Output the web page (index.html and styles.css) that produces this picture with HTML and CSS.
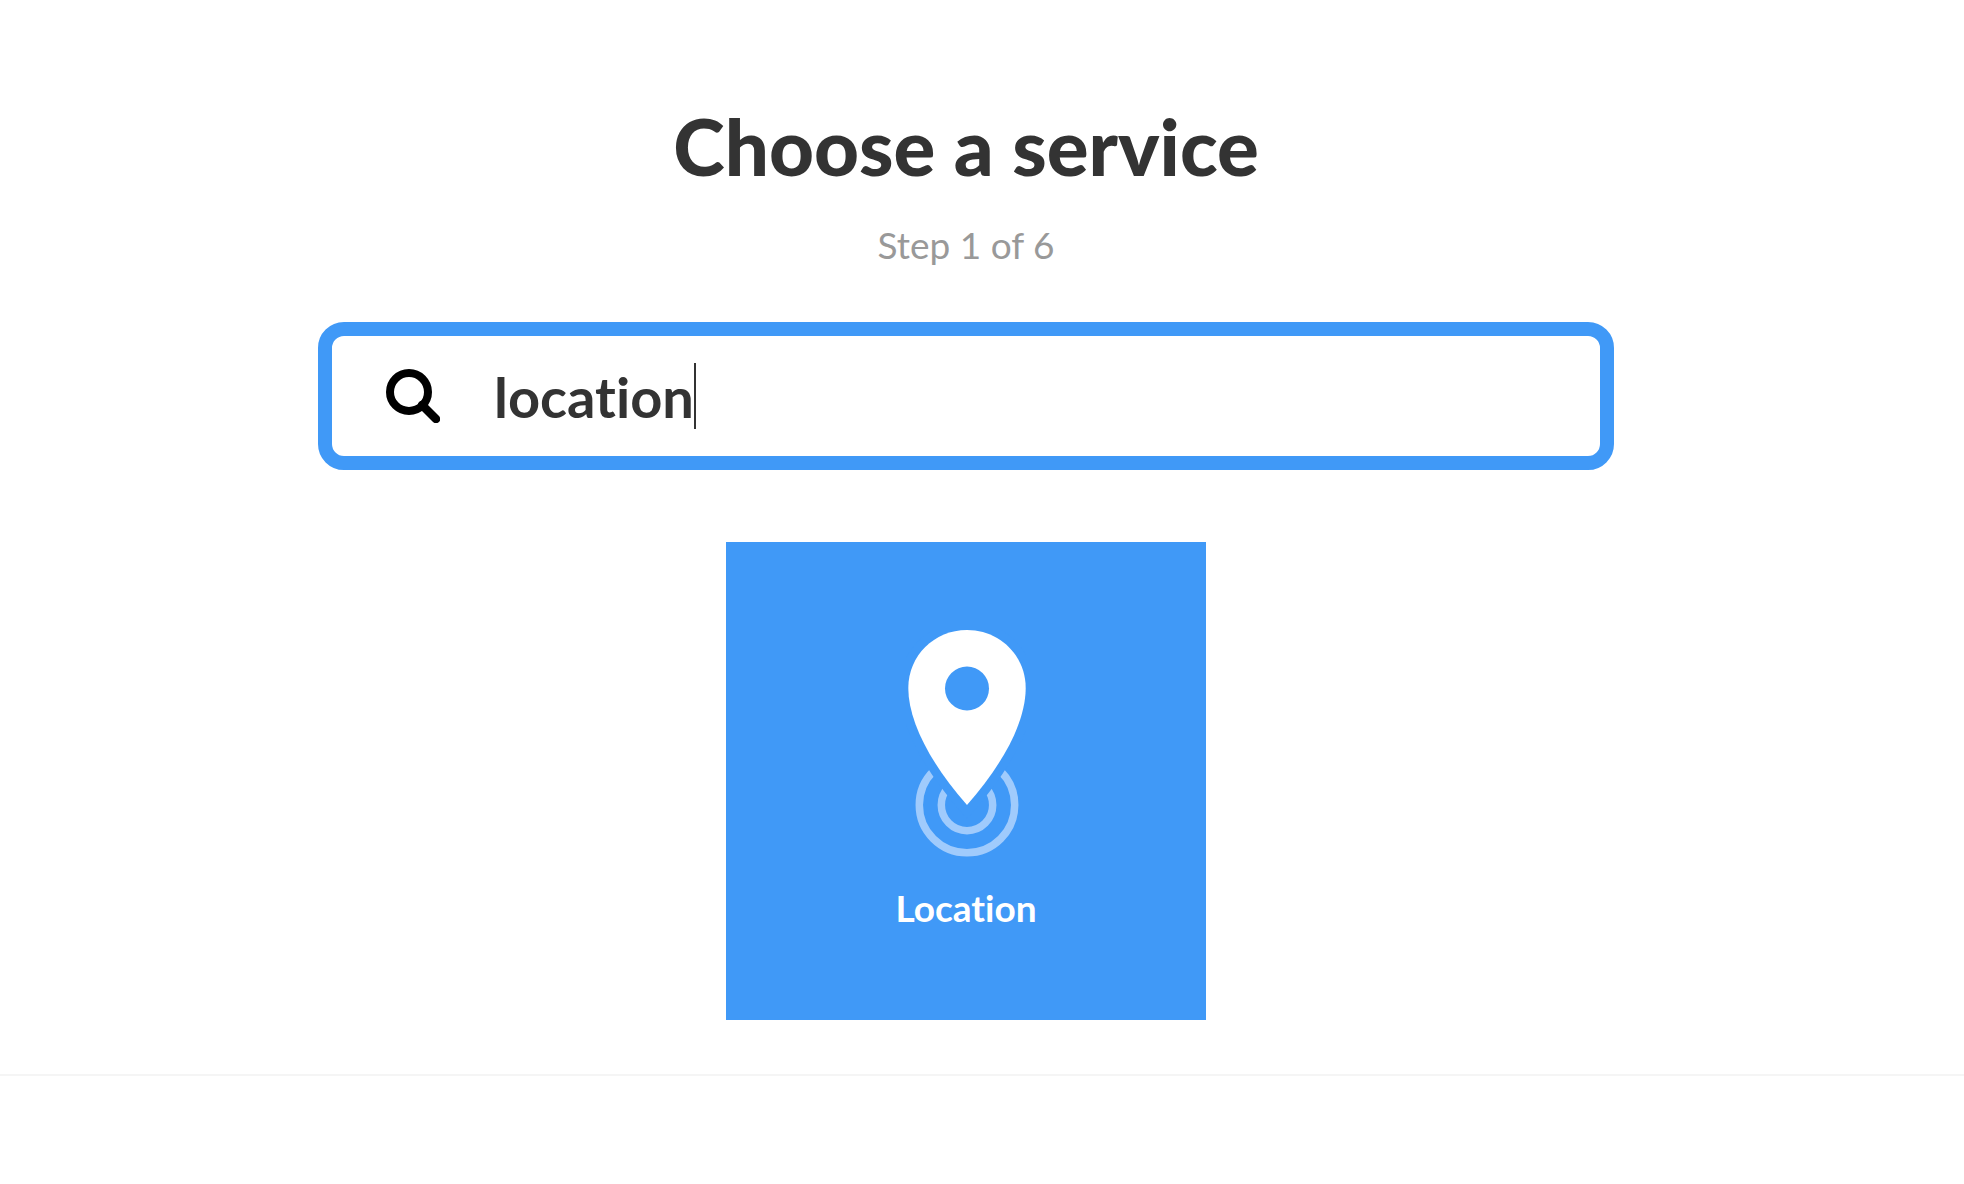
FILE: index.html
```html
<!DOCTYPE html>
<html lang="en">
<head>
    <meta charset="UTF-8">
    <title>Choose a service</title>
    <link rel="stylesheet" href="styles.css">
</head>
<body>

<main class="services">
    <h1 class="title">Choose a service</h1>
    <p class="step">Step 1 of 6</p>

    <label class="search">
        <svg class="search-icon" viewBox="0 0 54 54" aria-hidden="true">
            <circle cx="23" cy="23" r="19" fill="none" stroke="#000" stroke-width="8"/>
            <path d="M36 36 L50 50" stroke="#000" stroke-width="8.5" stroke-linecap="round"/>
        </svg>
        <span class="search-field">
            <input class="search-input" type="text" value="location" aria-label="Search services">
            <span class="caret"></span>
        </span>
    </label>

    <a class="service" href="#">
        <svg class="service-icon" viewBox="-1 0 120 228" aria-hidden="true">
            <g fill="none" stroke="#a0cbfc" stroke-width="7.5">
                <circle cx="60" cy="175" r="47.7"/>
                <circle cx="60" cy="175" r="25.7"/>
            </g>
            <!-- the outline cuts the rings around the pin -->
            <path d="M60 0 C27 0 1.300 26 1.300 58 C1.300 92 24 134 60 175 C96 134 118.700 92 118.700 58 C118.700 26 93 0 60 0 Z" fill="#4099f7" stroke="#4099f7" stroke-width="18"/>
            <path d="M60 0 C27 0 1.300 26 1.300 58 C1.300 92 24 134 60 175 C96 134 118.700 92 118.700 58 C118.700 26 93 0 60 0 Z" fill="#fff"/>
            <circle cx="60" cy="58.500" r="22" fill="#4099f7"/>
        </svg>
        <span class="service-name">Location</span>
    </a>
</main>

<footer class="footer"></footer>

</body>
</html>
```

FILE: styles.css
```css
* {
    box-sizing: border-box;
}

body {
    margin: 0;
    background: #fff;
    color: #333;
    font-family: Lato, "Open Sans", sans-serif;
    font-variant-ligatures: none;
}

.services {
    display: flex;
    flex-direction: column;
    align-items: center;
    padding: 100px 32px 54px 0;
}

.title {
    margin: 0;
    font-size: 78px;
    line-height: 92px;
    font-weight: 900;
}

.step {
    margin: 29px 0 53px;
    color: #999;
    font-size: 37px;
    line-height: 48px;
}

.search {
    display: flex;
    align-items: center;
    width: 100%;
    max-width: 1296px;
    padding: 26px 54px;
    border: 14px solid #4099f7;
    border-radius: 26px;
    cursor: text;
}

.search-icon {
    flex: none;
    width: 54px;
    height: 54px;
}

.search-field {
    position: relative;
    flex: 1;
    margin-left: 54px;
}

.search-input {
    display: block;
    width: 100%;
    height: 68px;
    padding: 0;
    border: 0;
    outline: none;
    background: none;
    color: #333;
    caret-color: transparent;
    font-family: inherit;
    font-variant-ligatures: none;
    font-size: 56px;
    font-weight: 700;
}

.caret {
    position: absolute;
    top: 1px;
    left: 200px;
    width: 2px;
    height: 66px;
    background: #333;
}

.service {
    display: flex;
    flex-direction: column;
    align-items: center;
    width: 480px;
    margin-top: 72px;
    padding: 88px 0;
    background: #4099f7;
    color: #fff;
    text-decoration: none;
}

.service-icon {
    width: 120px;
    height: 228px;
}

.service-name {
    margin-top: 26px;
    font-size: 37px;
    line-height: 48px;
    font-weight: 700;
}

.footer {
    border-top: 2px solid #f5f5f5;
}
```
